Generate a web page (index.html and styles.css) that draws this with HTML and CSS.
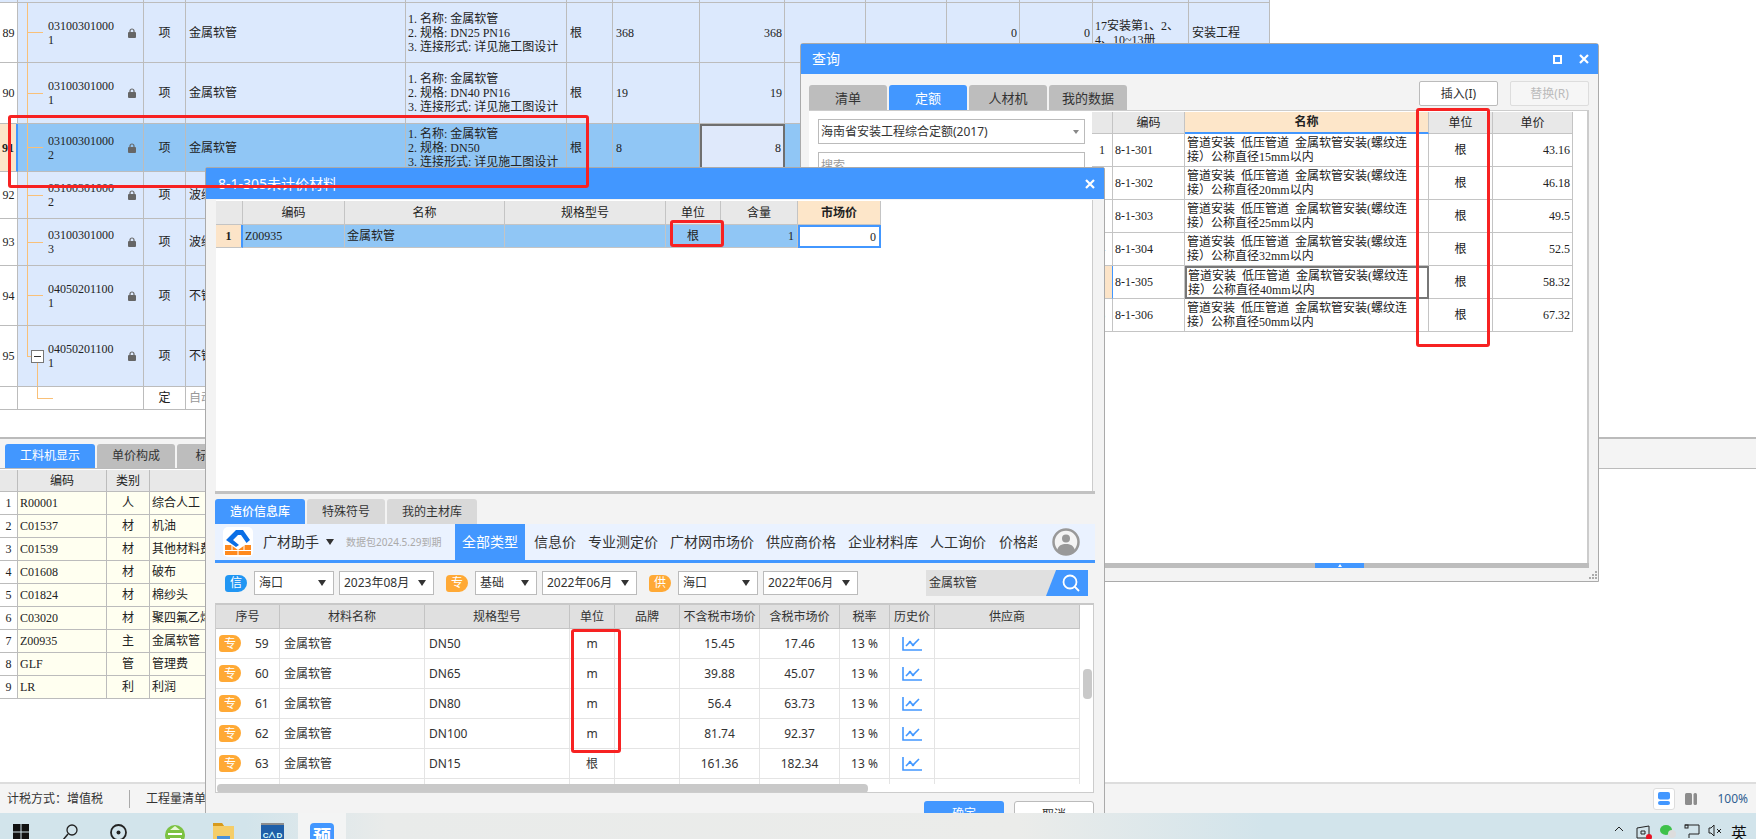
FILE: index.html
```html
<!DOCTYPE html>
<html lang="zh-CN">
<head>
<meta charset="utf-8">
<title>查询</title>
<link rel="stylesheet" href="styles.css">
</head>
<body>
<svg class="sprite" xmlns="http://www.w3.org/2000/svg">
  <symbol id="lock" viewBox="0 0 8 10"><path d="M2 4.5V3a2 2 0 0 1 4 0v1.500" fill="none" stroke="#666" stroke-width="1.200"/><rect x="0" y="4" width="8" height="6" rx="1" fill="#666"/></symbol>
  <symbol id="chart" viewBox="0 0 20 14"><path d="M1 0v13h19" fill="none" stroke="#4297ff" stroke-width="1.600"/><path d="M4 9l4-4 3 3 6-6" fill="none" stroke="#4297ff" stroke-width="1.600"/><circle cx="8" cy="5" r="1.300" fill="#4297ff"/><circle cx="11" cy="8" r="1.300" fill="#4297ff"/></symbol>
  <symbol id="xmark" viewBox="0 0 10 10"><path d="M1 1l8 8M9 1l-8 8" stroke="#fff" stroke-width="2.200" fill="none"/></symbol>
</svg>

<div class="app">
  <div class="upper">
    <div class="mrow h3"><div class="c"></div><div class="c"></div><div class="c"></div><div class="c"></div><div class="c"></div><div class="c"></div><div class="c"></div><div class="c"></div><div class="c"></div><div class="c"></div><div class="c"></div><div class="c"></div><div class="c"></div><div class="c"></div></div>

    <div class="mrow h60">
      <div class="c num">89</div>
      <div class="c code tree"><span>03100301000<br>1</span><svg class="lock"><use href="#lock"/></svg></div>
      <div class="c ctr">项</div><div class="c lft">金属软管</div>
      <div class="c feat">1.&nbsp;名称:&nbsp;金属软管<br>2.&nbsp;规格:&nbsp;DN25 PN16<br>3.&nbsp;连接形式:&nbsp;详见施工图设计</div>
      <div class="c lft">根</div><div class="c lft">368</div><div class="c rgt">368</div>
      <div class="c"></div><div class="c"></div><div class="c rgt">0</div><div class="c rgt">0</div>
      <div class="c feat">17安装第1、2、<br>4、10~13册</div><div class="c lft">安装工程</div>
    </div>

    <div class="mrow h61">
      <div class="c num">90</div>
      <div class="c code tree"><span>03100301000<br>1</span><svg class="lock"><use href="#lock"/></svg></div>
      <div class="c ctr">项</div><div class="c lft">金属软管</div>
      <div class="c feat">1.&nbsp;名称:&nbsp;金属软管<br>2.&nbsp;规格:&nbsp;DN40 PN16<br>3.&nbsp;连接形式:&nbsp;详见施工图设计</div>
      <div class="c lft">根</div><div class="c lft">19</div><div class="c rgt">19</div>
      <div class="c"></div><div class="c"></div><div class="c"></div><div class="c"></div><div class="c"></div><div class="c"></div>
    </div>

    <div class="mrow h48 sel-row">
      <div class="c num cur">91</div>
      <div class="c code tree"><span>03100301000<br>2</span><svg class="lock"><use href="#lock"/></svg></div>
      <div class="c ctr">项</div><div class="c lft">金属软管</div>
      <div class="c feat">1.&nbsp;名称:&nbsp;金属软管<br>2.&nbsp;规格:&nbsp;DN50<br>3.&nbsp;连接形式:&nbsp;详见施工图设计</div>
      <div class="c lft">根</div><div class="c lft">8</div><div class="c rgt edit">8</div>
      <div class="c"></div><div class="c"></div><div class="c"></div><div class="c"></div><div class="c"></div><div class="c"></div>
    </div>

    <div class="mrow h47">
      <div class="c num">92</div>
      <div class="c code tree"><span>03100301000<br>2</span><svg class="lock"><use href="#lock"/></svg></div>
      <div class="c ctr">项</div><div class="c lft">波纹管</div>
      <div class="c"></div><div class="c"></div><div class="c"></div><div class="c"></div><div class="c"></div><div class="c"></div><div class="c"></div><div class="c"></div><div class="c"></div><div class="c"></div>
    </div>

    <div class="mrow h47">
      <div class="c num">93</div>
      <div class="c code tree"><span>03100301000<br>3</span><svg class="lock"><use href="#lock"/></svg></div>
      <div class="c ctr">项</div><div class="c lft">波纹管</div>
      <div class="c"></div><div class="c"></div><div class="c"></div><div class="c"></div><div class="c"></div><div class="c"></div><div class="c"></div><div class="c"></div><div class="c"></div><div class="c"></div>
    </div>

    <div class="mrow h60">
      <div class="c num">94</div>
      <div class="c code tree"><span>04050201100<br>1</span><svg class="lock"><use href="#lock"/></svg></div>
      <div class="c ctr">项</div><div class="c lft">不锈钢管</div>
      <div class="c"></div><div class="c"></div><div class="c"></div><div class="c"></div><div class="c"></div><div class="c"></div><div class="c"></div><div class="c"></div><div class="c"></div><div class="c"></div>
    </div>

    <div class="mrow h61">
      <div class="c num">95</div>
      <div class="c code tree-end"><span class="minus"></span><span>04050201100<br>1</span><svg class="lock"><use href="#lock"/></svg></div>
      <div class="c ctr">项</div><div class="c lft">不锈钢管</div>
      <div class="c"></div><div class="c"></div><div class="c"></div><div class="c"></div><div class="c"></div><div class="c"></div><div class="c"></div><div class="c"></div><div class="c"></div><div class="c"></div>
    </div>

    <div class="mrow h23 plain">
      <div class="c"></div><div class="c tree-leaf"></div>
      <div class="c ctr">定</div><div class="c lft grey">自动</div>
      <div class="c"></div><div class="c"></div><div class="c"></div><div class="c"></div><div class="c"></div><div class="c"></div><div class="c"></div><div class="c"></div><div class="c"></div><div class="c"></div>
    </div>
  </div>

  <div class="lower">
    <div class="ltabs">
      <div class="ltab on">工料机显示</div>
      <div class="ltab w2">单价构成</div>
      <div class="ltab">标准换算</div>
    </div>
    <div class="ltable">
      <div class="lrow head"><div class="lc"></div><div class="lc ctr">编码</div><div class="lc ctr">类别</div><div class="lc ctr">名称</div></div>
      <div class="lrow"><div class="lc ctr no">1</div><div class="lc sim">R00001</div><div class="lc ctr">人</div><div class="lc">综合人工</div></div>
      <div class="lrow"><div class="lc ctr no">2</div><div class="lc sim">C01537</div><div class="lc ctr">材</div><div class="lc">机油</div></div>
      <div class="lrow"><div class="lc ctr no">3</div><div class="lc sim">C01539</div><div class="lc ctr">材</div><div class="lc">其他材料费</div></div>
      <div class="lrow"><div class="lc ctr no">4</div><div class="lc sim">C01608</div><div class="lc ctr">材</div><div class="lc">破布</div></div>
      <div class="lrow"><div class="lc ctr no">5</div><div class="lc sim">C01824</div><div class="lc ctr">材</div><div class="lc">棉纱头</div></div>
      <div class="lrow"><div class="lc ctr no">6</div><div class="lc sim">C03020</div><div class="lc ctr">材</div><div class="lc">聚四氟乙烯</div></div>
      <div class="lrow"><div class="lc ctr no">7</div><div class="lc sim">Z00935</div><div class="lc ctr">主</div><div class="lc">金属软管</div></div>
      <div class="lrow"><div class="lc ctr no">8</div><div class="lc sim">GLF</div><div class="lc ctr">管</div><div class="lc">管理费</div></div>
      <div class="lrow"><div class="lc ctr no">9</div><div class="lc sim">LR</div><div class="lc ctr">利</div><div class="lc">利润</div></div>
    </div>
  </div>

  <div class="status">
    <span class="st-a">计税方式：增值税</span>
    <span class="st-sep"></span>
    <span class="st-b">工程量清单</span>
    <span class="st-right">
      <span class="vbtn"><svg width="12" height="13" viewBox="0 0 12 13"><rect width="12" height="7.500" rx="2" fill="#4297ff"/><rect y="9" width="12" height="4" rx="2" fill="#4297ff"/></svg></span>
      <svg class="vb2" width="12" height="12" viewBox="0 0 12 12"><rect width="7" height="12" rx="1.500" fill="#8c8c8c"/><rect x="8.500" width="3.500" height="12" rx="1.500" fill="#8c8c8c"/></svg>
      <span class="zoom">100%</span>
    </span>
  </div>

  <div class="taskbar">
    <div class="tb-left">
      <svg class="i1" width="16" height="16" viewBox="0 0 16 16"><path d="M0 0h7.500v7.500H0zM8.500 0H16v7.500H8.500zM0 8.500h7.500V16H0zM8.500 8.500H16V16H8.500z" fill="#111"/></svg>
      <svg class="i2" width="16" height="18" viewBox="0 0 16 18"><circle cx="10" cy="6" r="5" fill="none" stroke="#222" stroke-width="1.300"/><path d="M6 10l-5 6" stroke="#222" stroke-width="1.500"/></svg>
      <svg class="i3" width="17" height="20" viewBox="0 0 17 20"><circle cx="8.500" cy="8.500" r="7.500" fill="none" stroke="#222" stroke-width="1.800"/><circle cx="8.500" cy="8.500" r="2" fill="#222"/><path d="M4 16l-1 3M13 16l1 3" stroke="#222" stroke-width="1.500"/></svg>
      <svg class="i4" width="21" height="24" viewBox="0 0 21 24"><circle cx="10" cy="12" r="10" fill="#7cc242"/><path d="M3 10h14v2H3zM5 15h11v2H5z" fill="#fff"/><path d="M5 7l5-4 5 4zM10 21l-4-3h8z" fill="#e8f8d8"/></svg>
      <svg class="i5" width="21" height="24" viewBox="0 0 21 24"><path d="M0 0h9l2 3h10v21H0z" fill="#f5cd68"/><path d="M0 0h9l2 3H0z" fill="#d79a1d"/><rect x="4" y="13" width="13" height="11" fill="#4a90d9"/></svg>
      <svg class="i6" width="23" height="24" viewBox="0 0 23 24"><rect width="23" height="24" rx="1" fill="#1f5fa8"/><rect x="0" y="0" width="23" height="2" fill="#8d8d8d"/><text x="11.500" y="15" class="cad">C∧D</text></svg>
      <span class="active"><span class="yu">预</span></span>
    </div>
    <div class="tb-right">
      <svg class="t1" width="10" height="12" viewBox="0 0 10 12"><path d="M1 7l4-4 4 4" fill="none" stroke="#222" stroke-width="1"/></svg>
      <svg class="t2" width="16" height="16" viewBox="0 0 16 16"><path d="M1 4l12-2v12H1z" fill="none" stroke="#222"/><path d="M5 7h4v3H5z" fill="none" stroke="#222"/><circle cx="13" cy="13" r="3" fill="#e81123"/></svg>
      <svg class="t3" width="16" height="15" viewBox="0 0 16 15"><ellipse cx="6" cy="6" rx="6" ry="5" fill="#3fc14a"/><circle cx="12" cy="10" r="4" fill="#ddd"/></svg>
      <svg class="t4" width="16" height="15" viewBox="0 0 16 15"><path d="M1 1h14v9H5v4" fill="none" stroke="#222"/><rect x="1" y="1" width="3" height="3" fill="none" stroke="#222"/></svg>
      <svg class="t5" width="15" height="14" viewBox="0 0 15 14"><path d="M1 4h2l3-3v11L3 9H1z" fill="none" stroke="#222"/><path d="M9 5l4 4M13 5l-4 4" stroke="#222"/></svg>
      <span class="ime">英</span>
    </div>
  </div>

  <!-- 查询 window -->
  <section class="win d1">
    <header class="wbar"><span class="wtitle">查询</span><span class="wctl"><span class="maxb"></span><svg class="xb" width="10" height="10"><use href="#xmark"/></svg></span></header>
    <div class="d1-top">
      <div class="tabs">
        <span class="tab">清单</span><span class="tab on">定额</span><span class="tab">人材机</span><span class="tab">我的数据</span>
      </div>
      <div class="acts"><span class="btn">插入(I)</span><span class="btn off">替换(R)</span></div>
    </div>
    <div class="d1-main">
      <div class="d1-left">
        <div class="combo"><span>海南省安装工程综合定额(2017)</span><i class="tri small"></i></div>
        <div class="search">搜索</div>
      </div>
      <div class="d1-right">
        <div class="qrow qhead"><div class="qc"></div><div class="qc ctr">编码</div><div class="qc ctr hot">名称</div><div class="qc ctr">单位</div><div class="qc ctr">单价</div></div>
        <div class="qrow"><div class="qc ctr">1</div><div class="qc">8-1-301</div><div class="qc tx">管道安装&nbsp;&nbsp;低压管道&nbsp;&nbsp;金属软管安装(螺纹连<br>接）公称直径15mm以内</div><div class="qc ctr">根</div><div class="qc rgt">43.16</div></div>
        <div class="qrow"><div class="qc ctr">2</div><div class="qc">8-1-302</div><div class="qc tx">管道安装&nbsp;&nbsp;低压管道&nbsp;&nbsp;金属软管安装(螺纹连<br>接）公称直径20mm以内</div><div class="qc ctr">根</div><div class="qc rgt">46.18</div></div>
        <div class="qrow"><div class="qc ctr">3</div><div class="qc">8-1-303</div><div class="qc tx">管道安装&nbsp;&nbsp;低压管道&nbsp;&nbsp;金属软管安装(螺纹连<br>接）公称直径25mm以内</div><div class="qc ctr">根</div><div class="qc rgt">49.5</div></div>
        <div class="qrow"><div class="qc ctr">4</div><div class="qc">8-1-304</div><div class="qc tx">管道安装&nbsp;&nbsp;低压管道&nbsp;&nbsp;金属软管安装(螺纹连<br>接）公称直径32mm以内</div><div class="qc ctr">根</div><div class="qc rgt">52.5</div></div>
        <div class="qrow"><div class="qc ctr cur">5</div><div class="qc">8-1-305</div><div class="qc tx picked">管道安装&nbsp;&nbsp;低压管道&nbsp;&nbsp;金属软管安装(螺纹连<br>接）公称直径40mm以内</div><div class="qc ctr">根</div><div class="qc rgt">58.32</div></div>
        <div class="qrow"><div class="qc ctr">6</div><div class="qc">8-1-306</div><div class="qc tx">管道安装&nbsp;&nbsp;低压管道&nbsp;&nbsp;金属软管安装(螺纹连<br>接）公称直径50mm以内</div><div class="qc ctr">根</div><div class="qc rgt">67.32</div></div>
      </div>
    </div>
    <div class="d1-split"><span class="thumb"><i></i></span></div>
    <div class="d1-foot"><svg width="8" height="8" viewBox="0 0 8 8"><path d="M6 0h2v2H6zM3 3h2v2H3zM6 3h2v2H6zM0 6h2v2H0zM3 6h2v2H3zM6 6h2v2H6z" fill="#aaa"/></svg></div>
  </section>

  <!-- 未计价材料 window -->
  <section class="win d2">
    <header class="wbar b2"><span class="wtitle t2t">8-1-305未计价材料</span><svg class="xb" width="10" height="10"><use href="#xmark"/></svg></header>
    <div class="d2-body">
      <div class="pane">
        <div class="prow phead"><div class="pc"></div><div class="pc ctr">编码</div><div class="pc ctr">名称</div><div class="pc ctr">规格型号</div><div class="pc ctr">单位</div><div class="pc ctr">含量</div><div class="pc ctr hot">市场价</div></div>
        <div class="prow psel"><div class="pc ctr pno">1</div><div class="pc">Z00935</div><div class="pc">金属软管</div><div class="pc"></div><div class="pc ctr">根</div><div class="pc rgt">1</div><div class="pc rgt pedit">0</div></div>
      </div>
      <div class="sep"></div>

      <div class="lib-tabs"><span class="lib-tab on">造价信息库</span><span class="lib-tab">特殊符号</span><span class="lib-tab w3">我的主材库</span></div>

      <div class="band">
        <div class="brand">
          <svg class="logo" width="30" height="30" viewBox="0 0 30 30"><rect width="30" height="30" rx="5" fill="#fff"/><path d="M2 18h6l7 5 7-5h6v10H2z" fill="#ff8a1e"/><path d="M2 23.500h26M9 18v5.500M21 18v5.500M15 23.500V28" stroke="#fff" stroke-width="1"/><path d="M3 13L13 3h7l7 10-3.500 3L18 8h-3l-5 5 6 5-3 2z" fill="#0b6fe6"/></svg>
          <span class="bname">广材助手</span><i class="tri"></i>
          <span class="bnote">数据包2024.5.29到期</span>
        </div>
        <span class="bt on">全部类型</span>
        <span class="bt">信息价</span><span class="bt">专业测定价</span><span class="bt">广材网市场价</span><span class="bt">供应商价格</span><span class="bt">企业材料库</span><span class="bt">人工询价</span><span class="bt clip">价格趋势</span>
        <svg class="avatar" width="28" height="28" viewBox="0 0 28 28"><circle cx="14" cy="14" r="12.500" fill="#f4f4f4" stroke="#999" stroke-width="2.500"/><circle cx="14" cy="10.500" r="4" fill="#999"/><path d="M5 23c1-6 5-7 9-7s8 1 9 7a12 12 0 0 1-18 0z" fill="#999"/></svg>
      </div>

      <div class="filters">
        <span class="badge blue">信</span><span class="fsel w80">海口<i class="tri"></i></span><span class="fsel w95">2023年08月<i class="tri"></i></span>
        <span class="badge gap">专</span><span class="fsel w62">基础<i class="tri"></i></span><span class="fsel w95">2022年06月<i class="tri"></i></span>
        <span class="badge gap">供</span><span class="fsel w80">海口<i class="tri"></i></span><span class="fsel w95">2022年06月<i class="tri"></i></span>
        <div class="fsearch"><span>金属软管</span><span class="fgo"><svg width="18" height="18" viewBox="0 0 18 18"><circle cx="8" cy="8" r="6.500" fill="none" stroke="#fff" stroke-width="1.800"/><path d="M12.500 12.500L17 17" stroke="#fff" stroke-width="1.800"/></svg></span></div>
      </div>

      <div class="grid">
        <div class="grow ghead"><div class="gc">序号</div><div class="gc">材料名称</div><div class="gc">规格型号</div><div class="gc">单位</div><div class="gc">品牌</div><div class="gc">不含税市场价</div><div class="gc">含税市场价</div><div class="gc">税率</div><div class="gc">历史价</div><div class="gc">供应商</div></div>
        <div class="gbody">
          <div class="grow"><div class="gc seq"><span class="badge sm">专</span><span class="sn">59</span></div><div class="gc gl">金属软管</div><div class="gc gl">DN50</div><div class="gc">m</div><div class="gc"></div><div class="gc">15.45</div><div class="gc">17.46</div><div class="gc">13 %</div><div class="gc"><svg class="chart" width="20" height="14"><use href="#chart"/></svg></div><div class="gc"></div></div>
          <div class="grow"><div class="gc seq"><span class="badge sm">专</span><span class="sn">60</span></div><div class="gc gl">金属软管</div><div class="gc gl">DN65</div><div class="gc">m</div><div class="gc"></div><div class="gc">39.88</div><div class="gc">45.07</div><div class="gc">13 %</div><div class="gc"><svg class="chart" width="20" height="14"><use href="#chart"/></svg></div><div class="gc"></div></div>
          <div class="grow"><div class="gc seq"><span class="badge sm">专</span><span class="sn">61</span></div><div class="gc gl">金属软管</div><div class="gc gl">DN80</div><div class="gc">m</div><div class="gc"></div><div class="gc">56.4</div><div class="gc">63.73</div><div class="gc">13 %</div><div class="gc"><svg class="chart" width="20" height="14"><use href="#chart"/></svg></div><div class="gc"></div></div>
          <div class="grow"><div class="gc seq"><span class="badge sm">专</span><span class="sn">62</span></div><div class="gc gl">金属软管</div><div class="gc gl">DN100</div><div class="gc">m</div><div class="gc"></div><div class="gc">81.74</div><div class="gc">92.37</div><div class="gc">13 %</div><div class="gc"><svg class="chart" width="20" height="14"><use href="#chart"/></svg></div><div class="gc"></div></div>
          <div class="grow"><div class="gc seq"><span class="badge sm">专</span><span class="sn">63</span></div><div class="gc gl">金属软管</div><div class="gc gl">DN15</div><div class="gc">根</div><div class="gc"></div><div class="gc">161.36</div><div class="gc">182.34</div><div class="gc">13 %</div><div class="gc"><svg class="chart" width="20" height="14"><use href="#chart"/></svg></div><div class="gc"></div></div>
          <div class="grow short"><div class="gc"></div><div class="gc"></div><div class="gc"></div><div class="gc"></div><div class="gc"></div><div class="gc"></div><div class="gc"></div><div class="gc"></div><div class="gc"></div><div class="gc"></div></div>
        </div>
        <div class="vthumb"></div>
        <div class="hscroll"><span></span></div>
      </div>

      <div class="d2-foot"><span class="okb">确定</span><span class="cancelb">取消</span></div>
    </div>
  </section>

  <!-- annotations -->
  <div class="mark m1"></div>
  <div class="mark m2"></div>
  <div class="mark m3"></div>
  <div class="mark m4"></div>
</div>
</body>
</html>
```

FILE: styles.css
```css
* { box-sizing: border-box; }
html, body { margin: 0; padding: 0; height: 100%; overflow: hidden; background: #fff; }
body { font: 12px/14px "Liberation Serif", "Noto Sans CJK SC", serif; color: #222; }
.sprite { display: none; }
.app { position: relative; width: 1756px; height: 839px; display: flex; flex-direction: column; overflow: hidden; }
.ctr { justify-content: center; text-align: center; }
.rgt { justify-content: flex-end; text-align: right; }

/* main estimate table */
.upper { height: 437px; flex: none; overflow: hidden; }
.mrow { display: grid; grid-template-columns: 18px 126px 42px 220px 161px 46px 87px 85px 81px 81px 73px 73px 96px 81px; width: 1270px; background: #dce9fd; }
.h3 { height: 3px; }
.h60 { height: 60px; }
.h61 { height: 61px; }
.h48 { height: 48px; }
.h47 { height: 47px; }
.h23 { height: 23px; }
.plain { background: #fff; }
.sel-row { background: #90c6f5; }
.c { display: flex; align-items: center; border-right: 1px solid #bcbcbc; border-bottom: 1px solid #bcbcbc; overflow: hidden; white-space: nowrap; min-width: 0; }
.h3 .c { border-bottom: 1px solid #bcbcbc; }
.lft { padding-left: 3px; }
.rgt { padding-right: 2px; }
.grey { color: #999; }
.feat { padding-left: 2px; white-space: nowrap; line-height: 14px; }
.num { background: #fff; justify-content: center; }
.num.cur { background: #fce4c8; font-weight: 700; color: #222; border-right: 2px solid #4297ff; }
.edit { background: #dfe9fb; border: 2px solid #6f6f6f; }
.code { padding: 0 7px 0 30px; justify-content: space-between; line-height: 14px; }
.code .lock { width: 8px; height: 10px; flex: none; }
.tree { background-image: linear-gradient(#f9c078, #f9c078), linear-gradient(#f9c078, #f9c078); background-size: 1px 100%, 16px 1px; background-position: 9px 0, 9px 50%; background-repeat: no-repeat; }
.tree-end { padding-left: 13px; background-image: linear-gradient(#f9c078, #f9c078), linear-gradient(#f9c078, #f9c078), linear-gradient(#f9c078, #f9c078); background-size: 1px 50%, 4px 1px, 1px 40%; background-position: 9px 0, 9px 50%, 19px 100%; background-repeat: no-repeat; }
.tree-leaf { background-image: linear-gradient(#f9c078, #f9c078), linear-gradient(#f9c078, #f9c078); background-size: 1px 50%, 16px 1px; background-position: 19px 0, 19px 50%; background-repeat: no-repeat; }
.minus { flex: none; width: 13px; height: 13px; margin-right: 4px; background: #fff linear-gradient(#333, #333) center / 7px 1px no-repeat; border: 1px solid #777; }
.tree-end > span:nth-child(2) { margin-right: auto; }

/* lower pane */
.lower { flex: 1; min-height: 0; overflow: hidden; border-top: 2px solid #bbb; font-family: "Noto Sans", "Noto Sans CJK SC", sans-serif; }
.ltabs { height: 30px; background: #f4f4f4; border-bottom: 1px solid #bbb; display: flex; align-items: flex-end; gap: 2px; padding-left: 5px; }
.ltab { width: 85px; height: 24px; background: #bdbdbd; border-radius: 3px 3px 0 0; display: flex; align-items: center; justify-content: center; color: #333; font-size: 12px; }
.ltab.on { width: 90px; background: #4297ff; color: #fff; }
.ltab.w2 { width: 78px; }
.ltable { margin-top: 1px; }
.lrow { display: grid; grid-template-columns: 18px 89px 43px 200px; height: 23px; background: #fffff0; width: 350px; }
.lrow.head { height: 22px; background: #e8e8e8; }
.lc { display: flex; align-items: center; padding-left: 2px; border-right: 1px solid #bcbcbc; border-bottom: 1px solid #bcbcbc; overflow: hidden; white-space: nowrap; }
.lc.ctr { padding-left: 0; }
.lc.no { background: #fff; font-family: "Liberation Serif", serif; }
.lc.sim { font-family: "Liberation Serif", serif; }
.lrow.head .lc:first-child { background: #e8e8e8; }

/* status bar */
.status { flex: none; height: 31px; background: #f4f4f4; border-top: 2px solid #ddd; display: flex; align-items: center; padding-left: 7px; font: 12px/16px "Noto Sans", "Noto Sans CJK SC", sans-serif; color: #333; }
.st-sep { width: 1px; height: 18px; background: #aaa; margin: 0 16px 0 26px; }
.st-right { margin-left: auto; display: flex; align-items: center; padding-right: 8px; }
.vbtn { width: 22px; height: 22px; background: #fff; border: 1px solid #ddd; border-radius: 3px; display: flex; align-items: center; justify-content: center; }
.vb2 { margin: 0 0 0 10px; }
.zoom { margin-left: 20px; color: #2f5f92; }

/* taskbar */
.taskbar { position: relative; z-index: 5; flex: none; height: 26px; overflow: hidden; display: flex; justify-content: space-between; background: linear-gradient(90deg, #d2e4eb 0, #d2e4eb 14%, #e9ebea 22%, #ebecea 58%, #d2e4eb 72%, #d2e4eb 100%); }
.tb-left { display: flex; align-items: flex-start; padding-left: 13px; padding-top: 11px; }
.tb-left svg { flex: none; }
.i2 { margin-left: 33px; }
.i3 { margin-left: 32px; }
.i4 { margin-left: 38px; margin-top: -1px; }
.i5 { margin-left: 27px; margin-top: -1px; }
.i6 { margin-left: 27px; margin-top: -1px; }
.cad { font: 700 8px "Liberation Sans", sans-serif; fill: #dff; text-anchor: middle; }
.active { width: 48px; height: 26px; margin: -11px 0 0 14px; padding-top: 10px; background: #f3f4f4; display: flex; justify-content: center; }
.yu { display: block; width: 24px; height: 24px; border-radius: 4px; background: #4297ff; color: #fff; font: 700 18px/24px "Noto Sans CJK SC", sans-serif; text-align: center; }
.tb-right { display: flex; align-items: flex-start; padding: 11px 9px 0 0; }
.tb-right svg { flex: none; }
.t2 { margin-left: 12px; }
.t3 { margin-left: 8px; }
.t4 { margin-left: 8px; }
.t5 { margin-left: 8px; }
.ime { margin-left: 8px; font: 16px/16px "Noto Sans CJK SC", sans-serif; color: #111; }

/* windows */
.win { position: absolute; background: #f3f3f3; border: 1px solid #aaa; border-radius: 3px 3px 0 0; }
.wbar { height: 30px; background: #4297ff; display: flex; align-items: center; justify-content: space-between; color: #fff; padding: 0 9px 0 11px; font: 14px/18px "Noto Sans", "Noto Sans CJK SC", sans-serif; }
.wctl { display: flex; align-items: center; gap: 17px; }
.maxb { width: 9px; height: 9px; border: 2px solid #fff; }
.xb { display: block; }

.d1 { left: 800px; top: 43px; width: 799px; height: 539px; z-index: 1; }
.d1-top { height: 36px; display: flex; justify-content: space-between; padding: 7px 9px 0 8px; }
.tabs { display: flex; gap: 2px; align-items: flex-end; padding-top: 4px; }
.tab { width: 78px; height: 25px; background: #bdbdbd; border-radius: 3px 3px 0 0; display: flex; align-items: center; justify-content: center; color: #333; font: 13px/16px "Noto Sans", "Noto Sans CJK SC", sans-serif; }
.tab.on { background: #4297ff; color: #fff; }
.acts { display: flex; gap: 12px; }
.btn { width: 79px; height: 25px; background: #fff; border: 1px solid #bbb; border-radius: 2px; display: flex; align-items: center; justify-content: center; color: #333; font: 12px/16px "Noto Sans", "Noto Sans CJK SC", sans-serif; }
.btn.off { color: #bbb; background: #f6f6f6; border-color: #ddd; }
.d1-main { height: 453px; margin: 0 9px 0 8px; display: flex; background: #fff; border-top: 1px solid #ccc; border-right: 2px solid #ccc; }
.d1-left { width: 283px; flex: none; padding: 8px 7px 0 9px; font: 12px/16px "Noto Sans", "Noto Sans CJK SC", sans-serif; }
.combo { height: 25px; border: 1px solid #bbb; display: flex; align-items: center; justify-content: space-between; padding: 0 5px 0 2px; color: #333; }
.search { height: 25px; margin-top: 8px; border: 1px solid #bbb; padding: 5px 2px; color: #999; }
.d1-right { flex: 1; padding-top: 1px; }
.qrow { display: grid; grid-template-columns: 21px 72px 244px 64px 80px; height: 33px; width: 481px; }
.qhead { height: 22px; background: #e8e8e8; }
.qc { display: flex; align-items: center; padding-left: 2px; border-right: 1px solid #c4c4c4; border-bottom: 1px solid #c4c4c4; white-space: nowrap; overflow: hidden; }
.qc.ctr { padding-left: 0; }
.qc.tx { padding-left: 2px; }
.qc.hot { background: #fde6c9; font-weight: 700; border-bottom: 2px solid #4297ff; }
.qc.cur { background: #fce4c8; border-right: 1px solid #4297ff; }
.qc.picked { border: 2px solid #777; padding-left: 1px; }
.d1-split { height: 5px; margin: 0 9px 0 8px; background: #bdbdbd; padding-left: 506px; }
.thumb { display: flex; width: 49px; height: 5px; background: #4297ff; align-items: center; justify-content: center; }
.thumb i { width: 0; height: 0; border: 2.500px solid transparent; border-top: 0; border-bottom: 3px solid #fff; }
.d1-foot { height: 12px; display: flex; justify-content: flex-end; align-items: flex-end; padding: 0 1px 1px 0; }

.d2 { left: 205px; top: 167px; width: 900px; height: 672px; z-index: 2; border-radius: 2px 2px 0 0; }
.b2 { height: 31px; padding: 0 9px 0 12px; }
.d2-body { padding: 1px 11px 0 10px; }
.pane { height: 291px; padding-top: 1px; background: #fff; border-right: 1px solid #ccc; }
.prow { display: grid; grid-template-columns: 27px 102px 160px 161px 55px 77px 83px; width: 665px; height: 23px; font-size: 12px; }
.phead { height: 24px; background: #e8e8e8; }
.pc { display: flex; align-items: center; padding-left: 2px; border-right: 1px solid #c4c4c4; border-bottom: 1px solid #c4c4c4; overflow: hidden; white-space: nowrap; }
.pc.ctr { padding-left: 0; }
.pc.rgt { padding-right: 3px; }
.pc.hot { background: #fde6c9; font-weight: 700; }
.psel { background: #90c6f5; }
.pno { background: #fce4c8; font-weight: 700; border-right: 2px solid #4297ff; }
.pedit { background: #fff; border: 2px solid #4297ff; }
.sep { height: 3px; background: #c2c2c2; margin: 0 -2px 0 -1px; }
.lib-tabs { height: 25px; margin: 5px 0 0 -1px; display: flex; gap: 2px; font: 12px/16px "Noto Sans", "Noto Sans CJK SC", sans-serif; }
.lib-tab { width: 78px; background: #d9d9d9; border-radius: 3px 3px 0 0; display: flex; align-items: center; justify-content: center; color: #333; }
.lib-tab.on { width: 90px; background: #4297ff; color: #fff; font-weight: 500; }
.lib-tab.w3 { width: 90px; }

.band { height: 39px; margin: 0 -2px 0 -1px; background: #eaf2ff; border-bottom: 3px solid #4297ff; display: flex; align-items: stretch; font: 14px/18px "Noto Sans", "Noto Sans CJK SC", sans-serif; color: #333; }
.brand { width: 240px; flex: none; display: flex; align-items: center; padding-left: 8px; }
.logo { flex: none; }
.bname { margin-left: 10px; }
.brand .tri { margin-left: 7px; }
.bnote { margin-left: 12px; font-size: 10px; color: #aaa; white-space: nowrap; }
.bt { display: flex; align-items: center; white-space: nowrap; margin-left: 12px; }
.bt.on { width: 70px; margin-left: 0; margin-right: -3px; justify-content: center; background: #4297ff; color: #fff; }
.bt.clip { display: block; width: 38px; margin-left: 13px; overflow: hidden; line-height: 36px; }
.avatar { flex: none; margin: 4px 0 0 15px; }
.tri { display: inline-block; width: 0; height: 0; border: 4px solid transparent; border-bottom: 0; border-top: 6px solid #333; }
.tri.small { border-width: 3px; border-bottom: 0; border-top: 4px solid #888; }

.filters { height: 40px; margin-left: -1px; padding-left: 10px; display: flex; align-items: center; font: 12px/16px "Noto Sans", "Noto Sans CJK SC", sans-serif; color: #333; }
.badge { flex: none; width: 22px; height: 17px; margin-right: 7px; background: #ffa935; color: #fff; border-radius: 4px 8px 9px 3px; display: flex; align-items: center; justify-content: center; font-size: 12px; }
.badge.blue { background: #2196f3; }
.badge.gap { margin-left: 7px; }
.badge.sm { margin: 0; }
.fsel { flex: none; height: 24px; margin-right: 5px; background: #fff; border: 1px solid #bbb; display: flex; align-items: center; justify-content: space-between; padding: 0 7px 0 4px; white-space: nowrap; }
.w80 { width: 80px; }
.w95 { width: 95px; }
.w62 { width: 62px; }
.fsearch { flex: none; width: 162px; height: 26px; margin-left: 63px; background: #e0e0e0; display: flex; align-items: center; justify-content: space-between; padding-left: 3px; }
.fgo { width: 42px; height: 26px; background: #4297ff; clip-path: polygon(24% 0, 100% 0, 100% 100%, 0 100%); display: flex; align-items: center; justify-content: center; padding-left: 8px; }

.grid { position: relative; height: 190px; margin: 0 -1px 0 -1px; background: #fff; border-top: 2px solid #c8c8c8; border-left: 1px solid #ccc; border-right: 1px solid #ccc; border-bottom: 1px solid #ccc; overflow: hidden; font: 12px/16px "Noto Sans", "Noto Sans CJK SC", sans-serif; color: #333; display: flex; flex-direction: column; }
.grow { display: grid; grid-template-columns: 64px 145px 145px 45px 65px 80px 80px 50px 45px 145px; width: 864px; height: 30px; flex: none; }
.ghead { height: 24px; background: #e0e0e0; }
.ghead .gc { border-right-color: #c4c4c4; border-bottom-color: #c4c4c4; }
.gbody { height: 155px; overflow: hidden; flex: none; }
.gc { display: flex; align-items: center; justify-content: center; border-right: 1px solid #e4e4e4; border-bottom: 1px solid #e4e4e4; white-space: nowrap; overflow: hidden; }
.gc.gl { justify-content: flex-start; padding-left: 4px; }
.gc.seq { justify-content: flex-start; padding-left: 3px; }
.sn { margin-left: 14px; }
.chart { display: block; }
.vthumb { position: absolute; right: 1px; top: 64px; width: 9px; height: 30px; background: #c9c9c9; border-radius: 4px; }
.hscroll { height: 9px; flex: none; }
.hscroll span { display: block; width: 651px; height: 9px; margin-left: 1px; background: #c9c9c9; border-radius: 4px; }
.d2-foot { display: flex; justify-content: flex-end; gap: 10px; margin: 8px -1px 0 0; font: 12px/16px "Noto Sans", "Noto Sans CJK SC", sans-serif; }
.okb { width: 80px; height: 28px; background: #4297ff; color: #fff; border-radius: 3px; text-align: center; line-height: 26px; }
.cancelb { width: 80px; height: 28px; background: #fff; border: 1px solid #bbb; border-radius: 3px; text-align: center; line-height: 26px; color: #333; }

/* red annotations */
.mark { position: absolute; z-index: 4; border: 3px solid #f72222; border-radius: 3px; pointer-events: none; }
.m1 { left: 8px; top: 115px; width: 581px; height: 73px; }
.m2 { left: 670px; top: 220px; width: 54px; height: 27px; }
.m3 { left: 1416px; top: 108px; width: 74px; height: 239px; }
.m4 { left: 571px; top: 629px; width: 50px; height: 124px; }
```
